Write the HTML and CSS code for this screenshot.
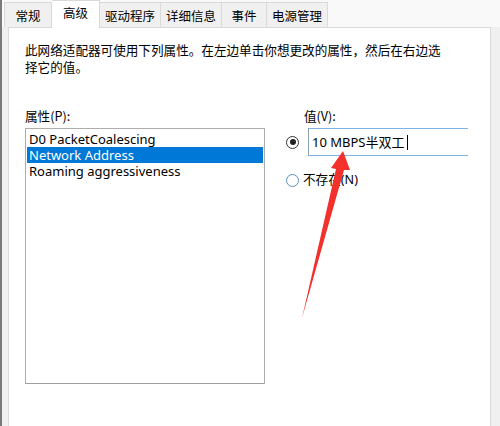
FILE: index.html
```html
<!DOCTYPE html>
<html lang="zh-CN">
<head>
    <meta charset="UTF-8">
    <title>高级</title>
    <link rel="stylesheet" href="styles.css">
</head>
<body>
    <div class="window">
        <div class="tabs">
            <div class="tab">常规</div>
            <div class="tab active">高级</div>
            <div class="tab">驱动程序</div>
            <div class="tab">详细信息</div>
            <div class="tab">事件</div>
            <div class="tab">电源管理</div>
        </div>
        <div class="panel">
            <p class="intro">此网络适配器可使用下列属性。在左边单击你想更改的属性，然后在右边选<br>择它的值。</p>
            <div class="columns">
                <div class="col-left">
                    <div class="label">属性(P):</div>
                    <ul class="listbox">
                        <li>D0 PacketCoalescing</li>
                        <li class="selected">Network Address</li>
                        <li>Roaming aggressiveness</li>
                    </ul>
                </div>
                <div class="col-right">
                    <div class="label value-label">值(V):</div>
                    <div class="radio-row">
                        <span class="radio checked"></span>
                        <div class="textbox">10 MBPS半双工<span class="caret"></span></div>
                    </div>
                    <div class="radio-row second">
                        <span class="radio"></span>
                        <span class="radio-text">不存在(N)</span>
                    </div>
                </div>
            </div>
        </div>
        <svg class="arrow" width="500" height="426" viewBox="0 0 500 426">
            <polygon points="343,151 350,170 344,170 302,318 336,169 331,168" fill="#f2302c"/>
        </svg>
    </div>
</body>
</html>
```

FILE: styles.css
```css
body {
    margin: 0;
    background: #ffffff;
    font-family: "Noto Sans", "Noto Sans CJK SC", sans-serif;
    color: #000000;
}
.window {
    position: relative;
    width: 500px;
    height: 426px;
    overflow: hidden;
    background: #f0f0f0;
    border-left: 2px solid #7a7a7a;
    box-sizing: border-box;
}
.tabs {
    display: flex;
    height: 27px;
    padding-left: 2px;
    background: #f9f9f9;
    font-family: "Noto Sans CJK SC", sans-serif;
    font-size: 12.5px;
}
.tab {
    min-width: 45px;
    box-sizing: border-box;
    padding: 0 5px;
    margin-top: 2px;
    line-height: 25px;
    background: #f0f0f0;
    border: 1px solid #d9d9d9;
    border-bottom: none;
    border-left: none;
    text-align: center;
}
.tab:first-child {
    border-left: 1px solid #d9d9d9;
    min-width: 48px;
}
.tab.active {
    margin-top: 0;
    line-height: 23px;
    height: 28px;
    background: #ffffff;
    min-width: 48px;
    position: relative;
    z-index: 1;
}
.panel {
    margin-left: 6px;
    width: 483px;
    height: 399px;
    box-sizing: border-box;
    background: #ffffff;
    border: 1px solid #d9d9d9;
    border-bottom: none;
    padding: 13px 0 0 16px;
}
.intro {
    margin: 0;
    font-family: "Noto Sans CJK SC", sans-serif;
    font-size: 12.6px;
    line-height: 17px;
}
.columns {
    display: flex;
    margin-top: 32px;
}
.label {
    font-family: "Noto Sans CJK SC", sans-serif;
    font-size: 12.6px;
    line-height: 17px;
    height: 21px;
}
.col-left {
    width: 240px;
}
.listbox {
    list-style: none;
    margin: 0;
    padding: 2px 1px;
    width: 240px;
    height: 256px;
    box-sizing: border-box;
    border: 1px solid #adadad;
    border-bottom-color: #a0a0a0;
    font-size: 13px;
}
.listbox li {
    height: 16px;
    line-height: 16px;
    padding-left: 2px;
}
.listbox li.selected {
    background: #0078d7;
    color: #ffffff;
}
.col-right {
    margin-left: 21px;
}
.value-label {
    margin-left: 18px;
}
.radio-row {
    display: flex;
    align-items: center;
    height: 28px;
}
.radio-row.second {
    margin-top: 16px;
    height: 16px;
}
.radio {
    width: 13px;
    height: 13px;
    box-sizing: border-box;
    border: 1px solid #5b8fc4;
    border-radius: 50%;
    position: relative;
    flex: none;
}
.radio.checked {
    border-color: #333333;
}
.radio.checked::after {
    content: '';
    position: absolute;
    left: 2.5px;
    top: 2.5px;
    width: 6px;
    height: 6px;
    border-radius: 50%;
    background: #222222;
}
.textbox {
    margin-left: 9px;
    width: 160px;
    height: 28px;
    box-sizing: border-box;
    border: 1px solid #7eb4ea;
    border-left-color: #8aa0b8;
    border-right: none;
    padding-left: 3px;
    font-size: 13px;
    line-height: 26px;
    font-family: "Noto Sans", "Noto Sans CJK SC", sans-serif;
}
.caret {
    display: inline-block;
    width: 1px;
    height: 15px;
    margin-left: 2px;
    background: #000000;
    vertical-align: -3px;
}
.radio-text {
    margin-left: 4px;
    font-size: 12.6px;
    line-height: 16px;
}
.arrow {
    position: absolute;
    left: -2px;
    top: 0;
    pointer-events: none;
}
```
